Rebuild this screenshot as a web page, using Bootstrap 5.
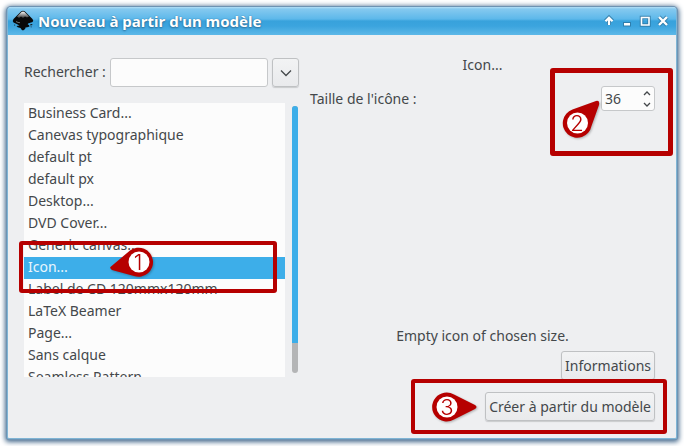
<!DOCTYPE html>
<html lang="fr">
<head>
<meta charset="utf-8">
<meta name="viewport" content="width=device-width, initial-scale=1">
<title>Nouveau à partir d'un modèle</title>
<link href="https://cdn.jsdelivr.net/npm/bootstrap@5.3.0/dist/css/bootstrap.min.css" rel="stylesheet">
<style>
:root{--ink:#44484b;--accent:#3daee9;--mark:#b60000}
body{background:#fff;color:var(--ink);font:14px/20px "Noto Sans",sans-serif}
.desk{padding:7px}
.win{background:#eeeff1;border:1px solid #7fb4d4;border-top:0;border-radius:4px 4px 2px 2px;box-shadow:0 0 0 1px #6d93b3,0 1px 5px 2px #45698c}
.titlebar{height:28px;padding:0 4px;gap:4px;border-radius:3px 3px 0 0;background:linear-gradient(#b5dff5 0,#85c9ef 2px,#5db8ea 12px,#38a2dc 14px,#3ba4de 19px,#5db8e8 28px)}
.title{font:700 15px/20px "Noto Sans",sans-serif;color:#fff;text-shadow:0 1px 2px #2b6d97,0 0 1px #2b6d97}
.winbtn{width:18px;height:20px}
.winbtn svg,.logo{display:block}
.content{padding:20px 21px 17px 16px;gap:11px}
.left{width:275px;padding-top:3px}
.find label{padding-bottom:1px}
.field{height:29px;border:1px solid #c6c8ca;border-radius:3px;background:#fcfcfc;color:var(--ink);font-size:14px}
.push{height:29px;padding:0 3px;background:linear-gradient(#f2f3f4,#e9eaec);border:1px solid #bfc1c3;border-radius:3px;color:var(--ink);font-size:14px;line-height:20px;box-shadow:0 1px 1px #c9cbcd}
.drop{width:27px}
.listwrap{margin-top:16px;gap:7px;height:274px}
.rows{height:274px;border-radius:0;background:#fcfcfc}
.rows .list-group-item{padding:0 4px 2px;height:22px;line-height:20px;border:0;background:none;color:var(--ink);flex:none}
.rows .list-group-item.active{background:var(--accent);color:#eaf6fd;margin:0}
.track{width:6px;margin:3px 1px 4px 0;border-radius:3px;background:#b4b5b6}
.thumb{height:237px;border-radius:3px 3px 0 0;background:var(--accent)}
.spin{width:54px;height:25px;border:1px solid #c6c8ca;border-radius:3px;background:#fcfcfc}
.spin input{width:32px;border:0;background:none;padding:0 0 0 3px;color:var(--ink);font-size:14px;appearance:textfield;-moz-appearance:textfield}
.spin input::-webkit-inner-spin-button{display:none}
.spin button{width:14px;height:11px;padding:0;border:0;background:none;line-height:0}
.size-row{margin-top:11px}
.info{margin-top:5px}
.create{margin-top:12px}
.frame{position:absolute;z-index:3;border:5px solid var(--mark);border-radius:3px;pointer-events:none}
.pin{position:absolute;z-index:4;pointer-events:none;overflow:visible;filter:drop-shadow(1px 1px 1px #0004)}
.pin path{fill:var(--mark)}
.pin circle{fill:#fff}
.pin text{fill:var(--mark);font:300 22px "Inter",sans-serif;text-anchor:middle}
.frame-1{left:-5px;right:22px;top:138px;height:52px;border-width:4px}
.pin-1{left:84px;top:143px}
.frame-2{right:-18px;top:-18px;width:123px;height:88px}
.pin-2{right:55px;top:12px}
.frame-3{right:-12px;top:-13px;width:256px;height:55px;border-width:4px}
.pin-3{right:177px;top:0}
</style>
<script src="https://cdn.jsdelivr.net/npm/bootstrap@5.3.0/dist/js/bootstrap.bundle.min.js"></script>
</head>
<body>
<div class="desk vh-100 d-flex">
<main class="win flex-grow-1 d-flex flex-column">
  <header class="titlebar d-flex align-items-center">
    <svg class="logo" width="22" height="22" viewBox="0 0 22 22" aria-hidden="true">
      <defs><linearGradient id="cap" x2="0" y2="1"><stop stop-color="#fff"/><stop offset="1" stop-color="#333"/></linearGradient></defs>
      <path d="M9 1.500Q11 0 13 1.500L20.500 9Q22 11 20.500 12L16 13.500Q15 14.500 17 15L17.500 16.500Q15 17.500 13.500 17.500Q14 19 11 20.500Q9.500 20 8.500 18Q5 17.500 4.500 16L7.500 15.500Q5 14 1.500 12.500Q0 11 1.500 9Z" fill="#080808"/>
      <path d="M9.500 2Q11 1 12.500 2L17 6.500L15 7.500L13 6.500L11 8L9 6.500L7 8L5 6.500Z" fill="url(#cap)"/>
      <path d="M18 14.500l2-.5.500 1-2 .6zM2 14.500l1.500.5-1 .8zM18.500 16.500l1.500.2-1 .8z" fill="#111"/>
      <path d="M4 11.500Q6 12.800 8 12.700" stroke="#999" stroke-width=".7" fill="none"/>
    </svg>
    <h1 class="title m-0 flex-grow-1">Nouveau à partir d'un modèle</h1>
    <div class="d-flex">
      <button class="winbtn btn p-0 border-0" aria-label="Enrouler"><svg width="18" height="20" viewBox="0 0 18 20"><path d="M9 14V8M5.500 10L9 6.500L12.500 10" fill="none" stroke="#2b6d97" stroke-width="4" opacity=".7"/><path d="M9 14V8M5.500 10.300L9 6.800L12.500 10.300" fill="none" stroke="#fff" stroke-width="2.200"/></svg></button>
      <button class="winbtn btn p-0 border-0" aria-label="Réduire"><svg width="18" height="20" viewBox="0 0 18 20"><path d="M5 11h8v4.500H5z" fill="#2b6d97" opacity=".7"/><path d="M6 12h6v2.500H6z" fill="#fff"/></svg></button>
      <button class="winbtn btn p-0 border-0" aria-label="Agrandir"><svg width="18" height="20" viewBox="0 0 18 20"><path d="M5.500 6.500h7.500v7.500h-7.500z" fill="none" stroke="#2b6d97" stroke-width="3.500" opacity=".7"/><path d="M5.500 6.500h7.500v7.500h-7.500z" fill="none" stroke="#fff" stroke-width="1.600"/></svg></button>
      <button class="winbtn btn p-0 border-0" aria-label="Fermer"><svg width="18" height="20" viewBox="0 0 18 20"><path d="M5 6l8 8M13 6l-8 8" stroke="#2b6d97" stroke-width="4.200" opacity=".7"/><path d="M5 6l8 8M13 6l-8 8" stroke="#fff" stroke-width="2.400"/></svg></button>
    </div>
  </header>

  <div class="content d-flex flex-grow-1">
    <section class="left flex-shrink-0">
      <div class="find d-flex align-items-center">
        <label for="search" class="flex-shrink-0 me-1">Rechercher :</label>
        <input id="search" type="text" class="field form-control flex-grow-1 px-1 py-0 ms-auto">
        <button class="drop push btn flex-shrink-0 ms-1" aria-label="Historique"><svg class="d-block mx-auto" width="12" height="8" viewBox="0 0 12 8"><path d="M1 1.500l5 5 5-5" fill="none" stroke="#44484b" stroke-width="1.300"/></svg></button>
      </div>
      <div class="listwrap d-flex position-relative">
        <div class="rows list-group flex-grow-1 overflow-hidden">
          <button class="list-group-item list-group-item-action">Business Card...</button>
          <button class="list-group-item list-group-item-action">Canevas typographique</button>
          <button class="list-group-item list-group-item-action">default pt</button>
          <button class="list-group-item list-group-item-action">default px</button>
          <button class="list-group-item list-group-item-action">Desktop...</button>
          <button class="list-group-item list-group-item-action">DVD Cover...</button>
          <button class="list-group-item list-group-item-action">Generic canvas...</button>
          <button class="list-group-item list-group-item-action active" aria-current="true">Icon...</button>
          <button class="list-group-item list-group-item-action">Label de CD 120mmx120mm</button>
          <button class="list-group-item list-group-item-action">LaTeX Beamer</button>
          <button class="list-group-item list-group-item-action">Page...</button>
          <button class="list-group-item list-group-item-action">Sans calque</button>
          <button class="list-group-item list-group-item-action">Seamless Pattern</button>
        </div>
        <div class="track"><div class="thumb"></div></div>
        <div class="frame frame-1"></div>
        <svg class="pin pin-1" width="46" height="32" viewBox="0 0 46 32"><path d="M3 20.500L22 4.500A14.500 14.500 0 1 1 26 30L4 24Q1 22 3 20.500Z"/><circle cx="31" cy="16" r="10.500"/><text x="30" y="24">1</text></svg>
      </div>
    </section>

    <section class="flex-grow-1 d-flex flex-column">
      <div class="text-center">Icon...</div>
      <div class="size-row d-flex align-items-center position-relative">
        <label for="size">Taille de l'icône :</label>
        <div class="spin d-flex align-items-center ms-auto">
          <input id="size" type="number" value="36">
          <div class="d-flex flex-column ms-auto">
            <button aria-label="Augmenter"><svg width="8" height="5" viewBox="0 0 8 5"><path d="M1 4l3-3 3 3" fill="none" stroke="#44484b" stroke-width="1.300"/></svg></button>
            <button aria-label="Diminuer"><svg width="8" height="5" viewBox="0 0 8 5"><path d="M1 1l3 3 3-3" fill="none" stroke="#44484b" stroke-width="1.300"/></svg></button>
          </div>
        </div>
        <div class="frame frame-2"></div>
        <svg class="pin pin-2" width="38" height="40" viewBox="0 0 38 40"><path d="M34 3L10.500 11.500A14.500 14.500 0 1 0 29.500 28L37 7Q38 2 34 3Z"/><circle cx="15.500" cy="25" r="10.500"/><text x="15" y="33">2</text></svg>
      </div>
      <div class="text-center mt-auto">Empty icon of chosen size.</div>
      <button class="info push btn align-self-end">Informations</button>
      <div class="create d-flex justify-content-end position-relative">
        <button class="push btn">Créer à partir du modèle</button>
        <div class="frame frame-3"></div>
        <svg class="pin pin-3" width="46" height="30" viewBox="0 0 46 30"><path d="M22 2.500L43 13Q46 15 43 17L22 27.500A14.500 14.500 0 1 1 22 2.500Z"/><circle cx="15" cy="15" r="10.500"/><text x="15" y="23">3</text></svg>
      </div>
    </section>
  </div>
</main>
</div>
</body>
</html>
